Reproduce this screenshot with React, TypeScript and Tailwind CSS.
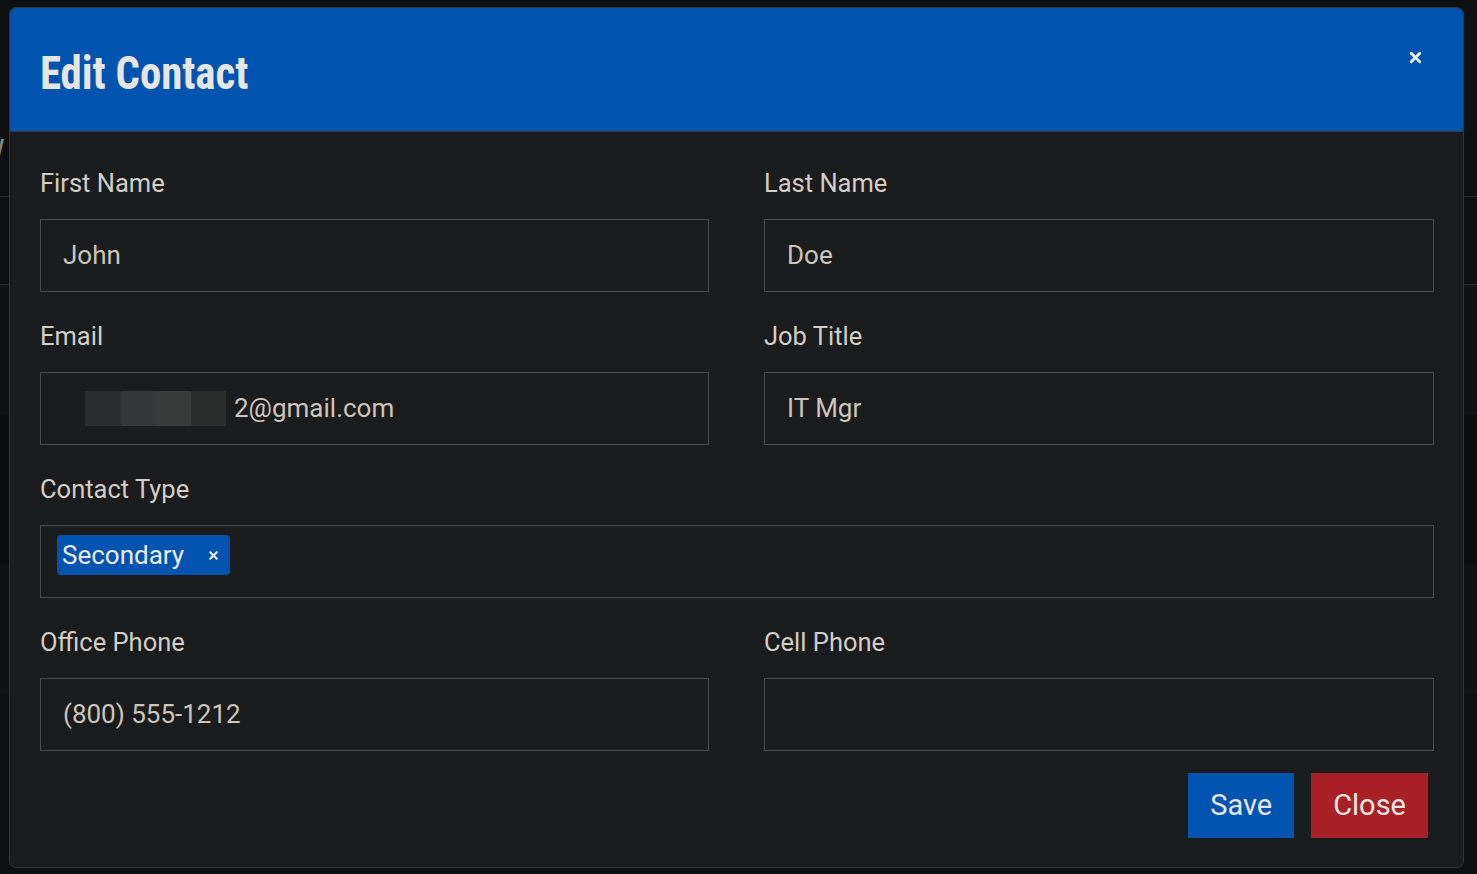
import { X } from "lucide-react";

const labelCls = "block text-[25.5px] leading-[30px] text-[#d2cdc5] mb-[21px]";
const inputCls =
  "flex items-center h-[73px] w-full border border-[#4a4b4c] bg-[#1a1b1d] px-[22px] text-[26px] text-[#cbc5bb]";

function Field({ label, value }: { label: string; value?: string }) {
  return (
    <div>
      <label className={labelCls}>{label}</label>
      <div className={inputCls}>{value}</div>
    </div>
  );
}

export default function App() {
  return (
    <div
      className="relative h-[874px] w-full overflow-hidden bg-[#0d0f10]"
      style={{ fontFamily: "Roboto, 'Noto Sans', sans-serif" }}
    >
      {/* page behind the dialog */}
      <div className="pt-[130px]">
        <div className="h-[67px] border-b border-[#2a2c2e] pl-[0px] text-[30px] leading-[40px] text-[#8a857d] -ml-[22px]">
          W
        </div>
        <div className="h-[88px] border-b border-[#2a2c2e]" />
        <div className="h-[130px] bg-[#0f1112]" />
        <div className="h-[150px] bg-[#0b0d0d]" />
        <div className="h-[130px] bg-[#0f1112]" />
      </div>

      {/* dialog */}
      <div className="absolute left-[9px] top-[7px] w-[1455px] overflow-hidden rounded-[7px] border border-[#333537] bg-[#1a1b1d]">
        <div className="relative flex h-[124px] items-center border-b border-[#3a3b3d] bg-[#0054b0] pl-[30px] pt-[6px]">
          <h1
            className="origin-left scale-x-[0.91] text-[47px] font-bold leading-none text-[#e8e6e3]"
            style={{ fontFamily: "'Liberation Sans Narrow', 'Roboto Condensed', Roboto, sans-serif" }}
          >
            Edit Contact
          </h1>
          <button className="absolute right-[39px] top-[41px] text-[#f0eeea]">
            <X size={17} strokeWidth={4} />
          </button>
        </div>

        <div className="pl-[30px] pr-[29px] pt-[36px] pb-[29px]">
          <div className="grid grid-cols-[669px_1fr] gap-x-[55px] gap-y-[29px]">
            <Field label="First Name" value="John" />
            <Field label="Last Name" value="Doe" />
            <div>
              <label className={labelCls}>Email</label>
              <div className={inputCls}>
                <span className="flex h-[35px] ml-[22px] mr-[8px]">
                  <span className="w-[36px] bg-[#2a2d30]" />
                  <span className="w-[36px] bg-[#353738]" />
                  <span className="w-[34px] bg-[#3a3c3b]" />
                  <span className="w-[35px] bg-[#2b2c2c]" />
                </span>
                2@gmail.com
              </div>
            </div>
            <Field label="Job Title" value="IT Mgr" />
            <div className="col-span-2">
              <label className={labelCls}>Contact Type</label>
              <div className="flex h-[73px] w-full items-start border border-[#4a4b4c] bg-[#1a1b1d] pl-[16px] pt-[9px]">
                <span className="flex h-[40px] items-center rounded-[4px] bg-[#0054b0] pl-[5px] pr-[10px] text-[26px] text-[#eceae6]">
                  Secondary
                  <X size={13} strokeWidth={4} className="ml-[23px]" />
                </span>
              </div>
            </div>
            <Field label="Office Phone" value="(800) 555-1212" />
            <Field label="Cell Phone" />
          </div>

          <div className="mt-[22px] flex justify-end gap-[17px] pr-[6px]">
            <button className="h-[65px] bg-[#0054b0] px-[22px] text-[29px] text-[#e8e6e3]">Save</button>
            <button className="h-[65px] bg-[#a82026] px-[22px] text-[29px] text-[#e8e6e3]">Close</button>
          </div>
        </div>
      </div>
    </div>
  );
}
